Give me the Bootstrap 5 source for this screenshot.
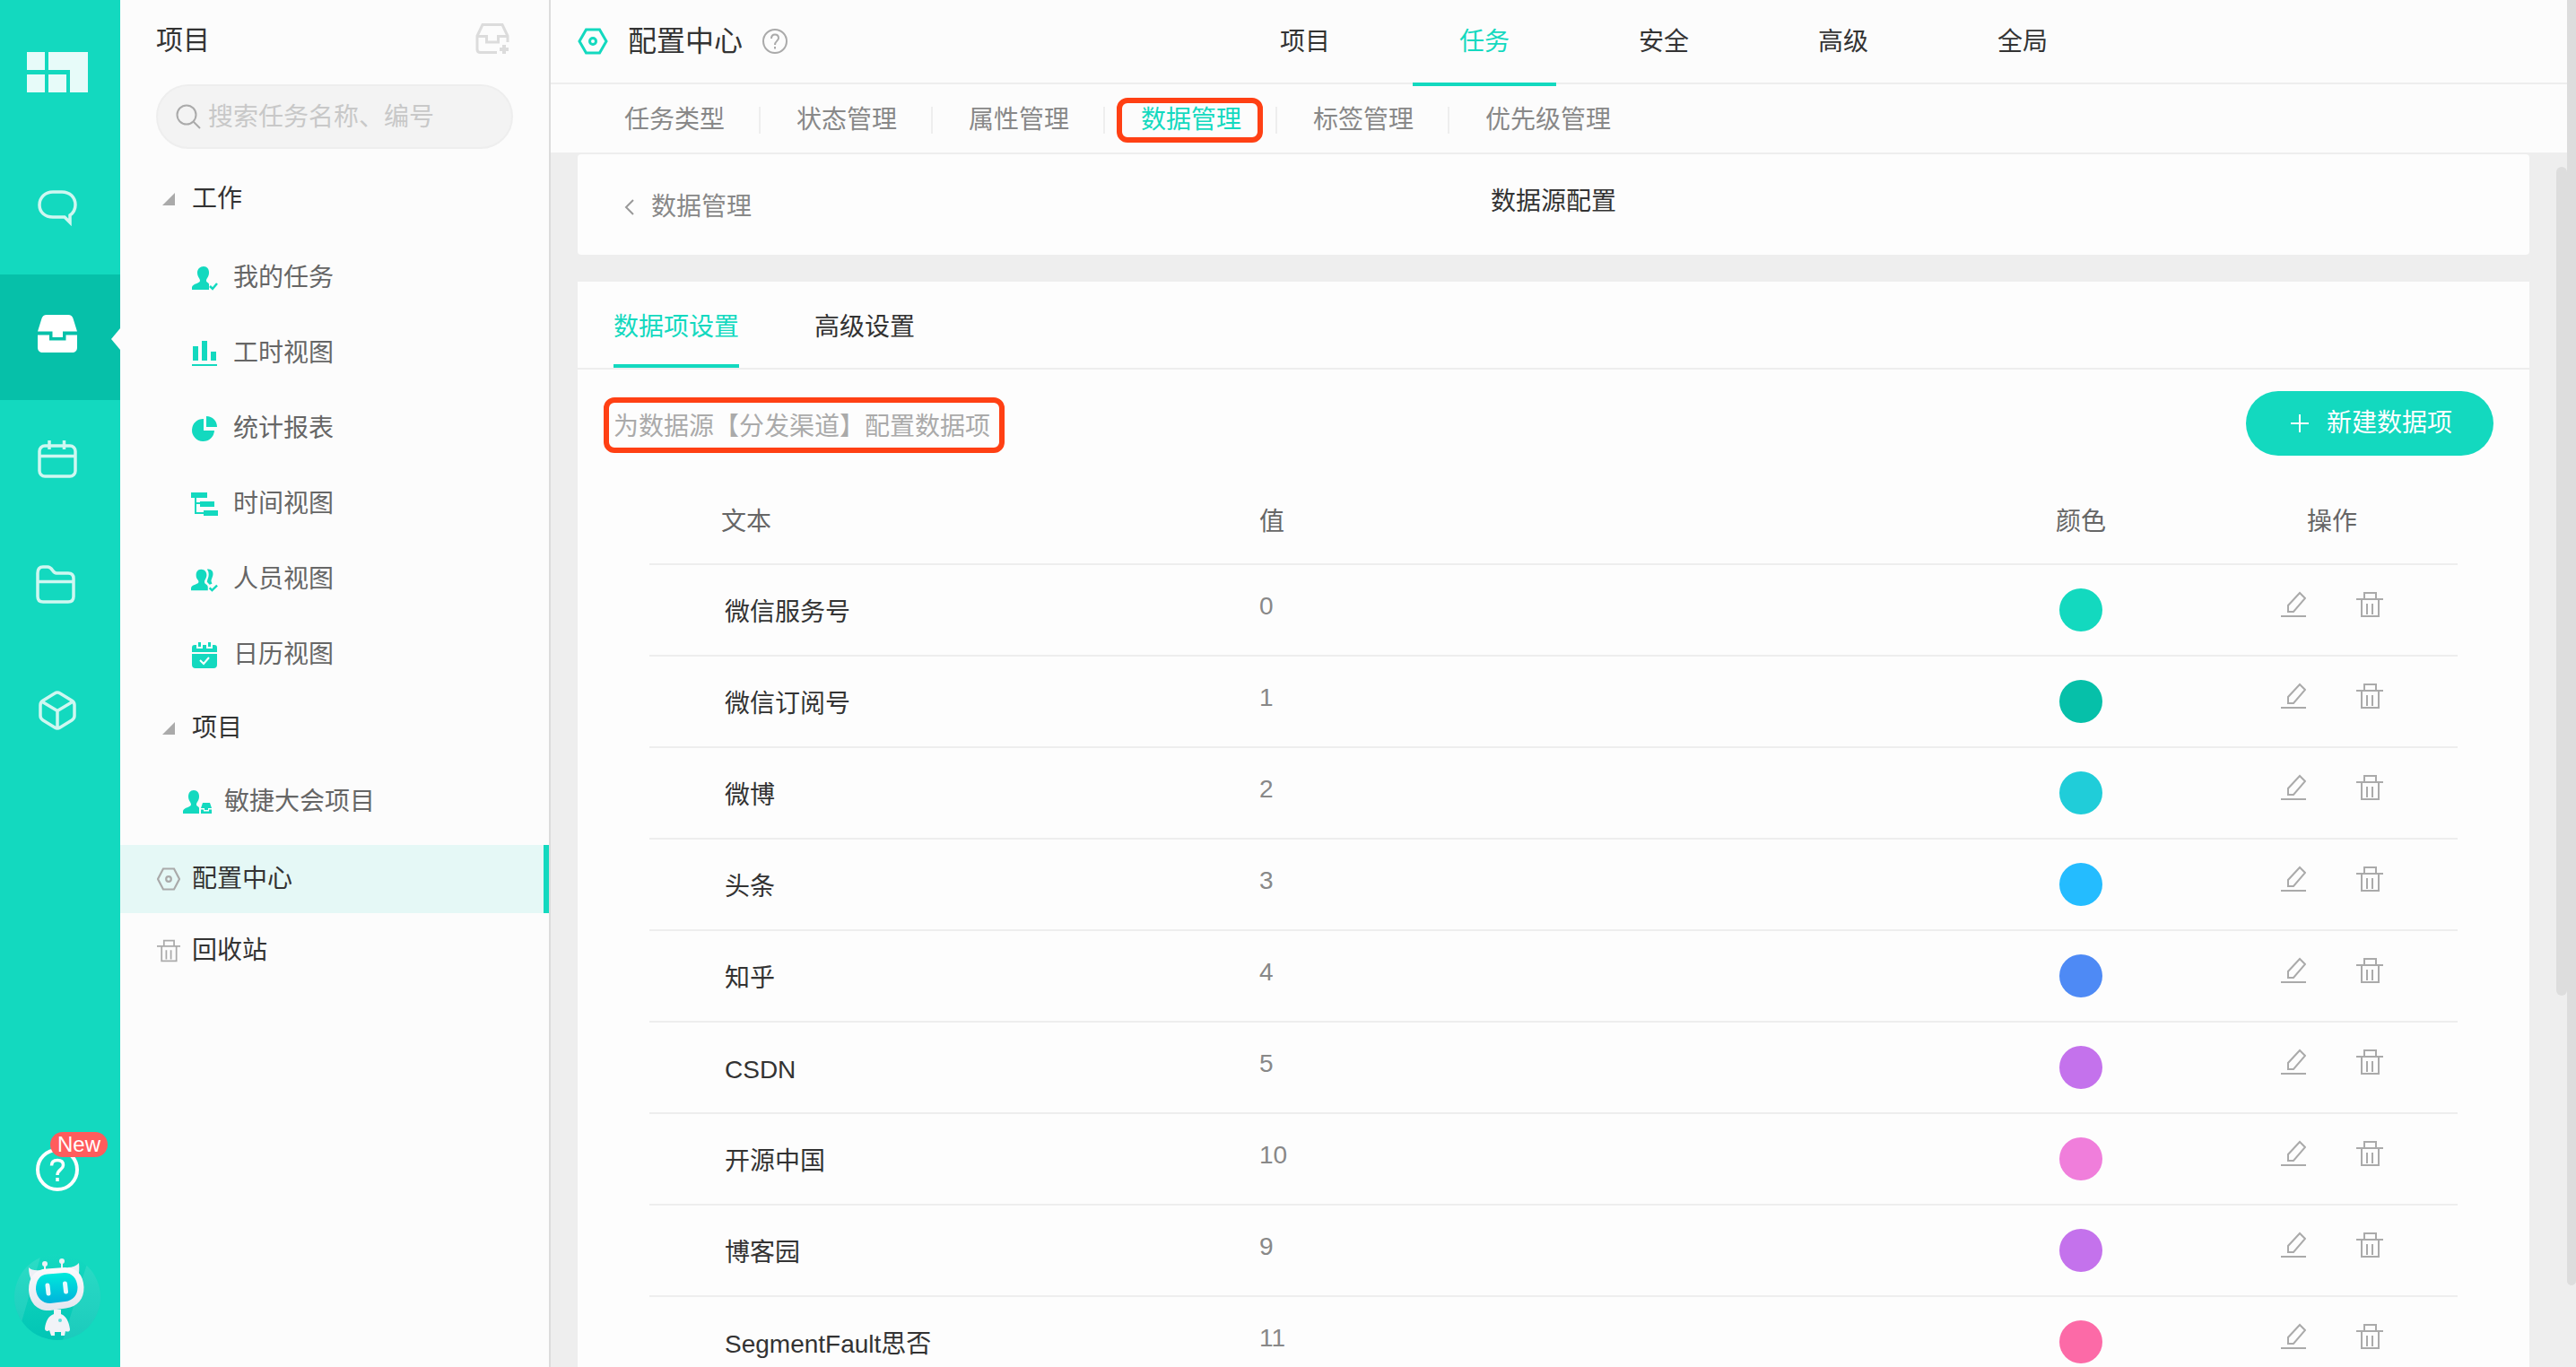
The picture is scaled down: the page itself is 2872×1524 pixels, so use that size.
<!DOCTYPE html>
<html lang="zh-CN">
<head>
<meta charset="utf-8">
<meta name="viewport" content="width=device-width, initial-scale=1">
<title>配置中心</title>
<link href="https://cdn.jsdelivr.net/npm/bootstrap@5.3.0/dist/css/bootstrap.min.css" rel="stylesheet">
<style>
:root { --teal: #13d9bf; --teal-dark: #06c0a9; --line: #eee; --ink: #333; --paper: #fdfdfd; }
body { font-family: "Liberation Sans", "Noto Sans CJK SC", sans-serif; font-size: 28px; line-height: 40px; color: var(--ink); background: #eee; }
a { color: inherit; text-decoration: none; }
svg { display: block; flex: none; }
.teal { color: var(--teal); }

/* icon rail */
.rail { width: 134px; background: var(--teal); color: #cff7f1; }
.rail-logo { height: 166px; padding: 58px 0 0 30px; }
.rail-link { height: 140px; padding: 0 6px 8px 0; }
.rail-link.active { background: var(--teal-dark); color: #fff; position: relative; }
.rail-link.active::after { content: ""; position: absolute; right: 0; top: 60px; border: solid transparent; border-width: 12px 10px 12px 0; border-right-color: #fcfcfc; }
.rail-help { position: relative; margin: 0 46px 70px 40px; color: #fff; }
.rail-new { position: absolute; left: 16px; top: -18px; width: 64px; height: 28px; line-height: 28px; padding: 0; font-size: 24px; font-weight: 400; background: #ff5c5c; }
.rail-avatar { margin: 0 0 30px 16px; }

/* project sidebar */
.side { width: 480px; background: #fcfcfc; border-right: 2px solid #dcdcdc; }
.side-head { padding: 25px 44px 0 40px; height: 94px; font-size: 30px; }
.side-search { margin: 0 40px; height: 72px; border: 2px solid var(--line); background: #f3f3f3; padding-left: 20px; }
.side-search input, .side-search input:focus { background: transparent; border: 0; box-shadow: none; padding: 2px 8px 0; font-size: 28px; line-height: 40px; color: var(--ink); }
.side-search input::placeholder { color: #c8c8c8; }
.side-group { height: 80px; margin-bottom: 6px; padding-left: 47px; gap: 19px; }
.side-item { height: 84px; padding-left: 79px; gap: 17px; color: #666; }
.side-project { height: 72px; margin-bottom: 12px; padding-left: 70px; gap: 14px; color: #666; }
.side-link { height: 76px; padding-left: 41px; gap: 13px; }
.side-link.active { background: #e5f8f6; border-right: 6px solid var(--teal); }
.side-link svg { color: #aaa; }

/* top bar */
.topbar { height: 94px; background: #fcfcfc; border-bottom: 2px solid var(--line); padding: 0 30px; position: relative; z-index: 1; }
.topbar-title { font-size: 32px; margin: 0 22px; }
.topbar-tabs { gap: 40px; }
.topbar-tabs a { width: 160px; height: 96px; padding-top: 27px; text-align: center; border-bottom: 4px solid transparent; }
.topbar-tabs a.active { color: var(--teal); border-color: var(--teal); }
.subnav { height: 78px; background: #fcfcfc; border-bottom: 2px solid var(--line); padding: 3px 0 0 42px; color: #888; }
.subnav a { padding: 0 40px; position: relative; }
.subnav a + a::before { content: ""; position: absolute; left: -2px; top: 5px; width: 2px; height: 30px; background: var(--line); }
.subnav a.active::after { content: ""; position: absolute; left: 13px; right: 16px; top: -5px; height: 50px; border: 6px solid #ff4014; border-radius: 12px; }

/* content */
.stage { padding: 0 42px 0 30px; position: relative; }
.crumb { height: 112px; background: var(--paper); border-radius: 4px; padding: 0 52px; position: relative; }
.crumb-back { padding-top: 6px; gap: 19px; color: #888; }
.crumb-title { position: absolute; left: 0; right: 0; top: 33px; text-align: center; pointer-events: none; }
.sheet { margin-top: 30px; background: var(--paper); }
.sheet-tabs { height: 98px; padding: 0 40px; gap: 84px; border-bottom: 2px solid var(--line); }
.sheet-tabs a { height: 96px; padding-top: 31px; border-bottom: 4px solid transparent; }
.sheet-tabs a.active { color: var(--teal); border-color: var(--teal); }
.sheet-bar { padding: 24px 40px 0 29px; }
.sheet-note { height: 62px; margin-top: 3px; border: 6px solid #ff4014; border-radius: 12px; padding: 7px 10px 0 5px; color: #aaa; }
.btn-new { height: 72px; padding: 0 46px 0 50px; gap: 20px; font-size: 28px; line-height: 40px; color: #fff; background: var(--teal); border: 0; }
.btn-new:hover { color: #fff; background: var(--teal-dark); }
.data-wrap { padding: 18px 80px 0; }
.data-grid { table-layout: fixed; width: 100%; }
.data-grid th { height: 103px; padding: 10px 0 0; font-weight: 400; color: #666; border-bottom: 2px solid var(--line); }
.data-grid td { height: 102px; padding: 0; border-bottom: 2px solid var(--line); vertical-align: middle; }
.col-text { width: 33.73%; }
.col-side { width: 13.89%; text-align: center; }
.data-grid th.col-text { padding-left: 80px; }
.data-grid td:first-child { padding: 5px 0 0 84px; }
.data-grid td:nth-child(2) { color: #888; padding-bottom: 8px; }
.data-grid td:nth-child(4) { padding-bottom: 12px; }
.dot { display: block; width: 48px; height: 48px; border-radius: 50%; margin: 0 auto; }
.icon-btn { background: none; border: 0; padding: 0; color: #aaa; }
.acts { gap: 56px; }
.thumb-inner { position: absolute; right: 0; top: 14px; width: 12px; height: 924px; border-radius: 6px; background: #ddd; }
.thumb-page { width: 10px; height: 94%; background: #ddd; border-radius: 0 0 5px 5px; }
</style>
<script src="https://cdn.jsdelivr.net/npm/bootstrap@5.3.0/dist/js/bootstrap.bundle.min.js"></script>
</head>
<body>
<svg width="0" height="0" class="position-absolute" aria-hidden="true">
  <symbol id="i-edit" viewBox="0 0 28 30"><path d="M8 23V16L21 2l6 6L14 23zM0 28h28" fill="none" stroke="currentColor" stroke-width="2"/></symbol>
  <symbol id="i-trash" viewBox="0 0 30 30"><path d="M0 9h30M9 9V2h13v7M6 9v19h19V9M12 14v12M18 14v12" fill="none" stroke="currentColor" stroke-width="2"/></symbol>
  <symbol id="i-hex" viewBox="0 0 34 30"><path d="M9.500 2h15L32 15l-7.500 13h-15L2 15z" fill="none" stroke="currentColor" stroke-width="3"/><circle cx="17" cy="15" r="3.500" fill="none" stroke="currentColor" stroke-width="3"/></symbol>
  <symbol id="i-hex-small" viewBox="0 0 26 26"><path d="M7 1.500h12L25 13l-6 11.500H7L1 13z" fill="none" stroke="currentColor" stroke-width="2.200"/><circle cx="13" cy="13" r="2.800" fill="none" stroke="currentColor" stroke-width="2.200"/></symbol>
</svg>
<div class="d-flex vh-100 overflow-hidden">

  <nav class="rail d-flex flex-column flex-shrink-0">
    <a class="rail-logo" href="#" aria-label="首页">
      <svg width="68" height="46" fill="#e7fbf9"><path d="M0 0h20v20H0zM0 25h20v20H0zM24 25h20v20H24zM24 0h44v45H48V20H24z"/></svg>
    </a>
    <a class="rail-link d-flex align-items-center justify-content-center" href="#" aria-label="消息">
      <svg width="44" height="40" viewBox="0 0 44 40" fill="none" stroke="currentColor" stroke-width="3.500"><path d="M17 2h10c9 0 15 6 15 14.500 0 5-2.500 9-6 11.500V36l-6-6H17C8 30 2 24.500 2 16.500S8 2 17 2z"/></svg>
    </a>
    <a class="rail-link active d-flex align-items-center justify-content-center" href="#" aria-label="项目">
      <svg width="44" height="42" viewBox="0 0 44 42" fill="currentColor"><path d="M10 0h24c3 0 4.500 1.500 5.500 4L44 18.500H28V25H16.500v-6.500H0L4.500 4C5.500 1.500 7 0 10 0zM0 22.500h13V28.500h18.500v-6H44V36c0 4-2 6-6 6H6c-4 0-6-2-6-6z"/></svg>
    </a>
    <a class="rail-link d-flex align-items-center justify-content-center" href="#" aria-label="日历">
      <svg width="44" height="42" viewBox="0 0 44 42" fill="none" stroke="currentColor" stroke-width="3.500"><rect x="2" y="6" width="40" height="34" rx="6"/><path d="M2 17.500h40M13 0v10M29.500 0v10"/></svg>
    </a>
    <a class="rail-link d-flex align-items-center justify-content-center" href="#" aria-label="文件">
      <svg width="48" height="44" viewBox="0 0 48 44" fill="none" stroke="currentColor" stroke-width="3.500"><path d="M2 18.500h40M2 9c0-5 2-7 6-7h5c6 0 5 7 10 7h13c4 0 6 2 6 6v20c0 4-2 6-6 6H8c-4 0-6-2-6-6z"/></svg>
    </a>
    <a class="rail-link d-flex align-items-center justify-content-center" href="#" aria-label="应用">
      <svg width="42" height="44" viewBox="0 0 42 44" fill="none" stroke="currentColor" stroke-width="3.500" stroke-linejoin="round"><path d="M18 3q3-2 6 0l13 8q3 2 3 5v12q0 3-3 5l-13 8q-3 2-6 0L5 33q-3-2-3-5V16q0-3 3-5zM3.500 12L21 22.500 38.500 12M21 22.500V42"/></svg>
    </a>
    <a class="rail-help mt-auto" href="#" aria-label="帮助">
      <svg width="48" height="48" viewBox="0 0 48 48" fill="none" stroke="currentColor" stroke-width="4"><circle cx="24" cy="24" r="22"/><path d="M17.500 19.500c0-4 2.500-6 6.500-6s6.500 2 6.500 5.500c0 5-6.500 5-6.500 11M24 33v4" stroke-width="3.500"/></svg>
      <span class="rail-new badge rounded-pill">New</span>
    </a>
    <a class="rail-avatar" href="#" aria-label="小助手">
      <svg width="96" height="96" viewBox="0 0 96 96">
        <defs>
          <linearGradient id="g-disc" x1="0" y1="0" x2="0" y2="1"><stop offset="0" stop-color="#14d9c0"/><stop offset="1" stop-color="#02c5b5"/></linearGradient>
          <linearGradient id="g-face" x1="0" y1="0" x2="0" y2="1"><stop offset="0" stop-color="#00eadb"/><stop offset="1" stop-color="#00b2dc"/></linearGradient>
          <linearGradient id="g-body" x1="0" y1="0" x2="0" y2="1"><stop offset="0" stop-color="#fbfbfd"/><stop offset="1" stop-color="#e3e6ef"/></linearGradient>
          <clipPath id="c-disc"><circle cx="48" cy="48" r="48"/></clipPath>
        </defs>
        <circle cx="48" cy="48" r="48" fill="url(#g-disc)"/>
        <g clip-path="url(#c-disc)" fill="#fff" fill-opacity=".1"><path d="M30 0L8 76-10 76V0zM82 8L54 96h50V8z"/></g>
        <path d="M34 11v8M53 9v8" stroke="#eef1f6" stroke-width="2"/><circle cx="34" cy="11" r="3" fill="#eef1f6"/><circle cx="53" cy="8" r="3" fill="#eef1f6"/>
        <path d="M16 15q4 4 13 3L19 29q-3-6-3-14zM72 10q-4 5-13 5l12 11q2-7 1-16z" fill="#eef0f6"/>
        <path d="M36 16.500L56 15c13-.5 21 8 21.500 22 .3 13-7 22-20 23.500L40 63C26 64 17 55 16 40c0-14 7-23 20-23.500z" fill="url(#g-body)"/>
        <path d="M37 22.500L56 21c8 0 14 6 14.500 16 0 9-5 15-14 16L40 55c-9 0-15-6-16-15.500 0-9.500 4-16.500 13-17z" fill="url(#g-face)"/>
        <path d="M37 35l1 9M56.500 33l1 9" stroke="#e9faff" stroke-width="5" stroke-linecap="round"/>
        <path d="M44 62h8v5c6 2 9 9 10 17 0 3-3 3-5 2l-1 5h-4v-4h-7v4h-4l-2-6c-2 2-5 1-5-2 1-8 4-14 10-16z" fill="#f1f3f8"/>
        <circle cx="51" cy="74" r="2" fill="#5fdcdc"/>
      </svg>
    </a>
  </nav>

  <aside class="side flex-shrink-0">
    <div class="side-head d-flex justify-content-between align-items-start">
      <span>项目</span>
      <button class="icon-btn" type="button" aria-label="新建项目">
        <svg width="38" height="36" viewBox="0 0 38 36" fill="none" stroke="#dcdcdc" stroke-width="3"><path d="M36 22v-7L30 2.500H8L2 15v15q0 3.500 3.500 3.500H24M2 15.500h10.500V22h13v-6.500H36"/><path d="M32 25v10M27 30h10" stroke-width="4"/></svg>
      </button>
    </div>
    <div class="side-search d-flex align-items-center rounded-pill">
      <svg width="28" height="28" viewBox="0 0 28 28" fill="none" stroke="#aaa" stroke-width="2"><circle cx="12" cy="12" r="10.500"/><path d="M19.500 19.500L27 27"/></svg>
      <input class="form-control" type="text" placeholder="搜索任务名称、编号" aria-label="搜索任务名称、编号">
    </div>

    <div class="side-group d-flex align-items-center mt-3">
      <svg width="14" height="14" fill="#aaa"><path d="M14 0v14H0z"/></svg><span>工作</span>
    </div>
    <a class="side-item d-flex align-items-center" href="#">
      <svg width="30" height="30" viewBox="0 0 30 30" fill="#13d9bf"><path d="M14 2c4 0 6 3 6 7 0 5-3 6-3 9 0 2 3 2 3 4v6H1v-3c1-4 9-4 9-7S7 14 7 9c0-4 3-7 7-7z"/><path d="M21 24l3 3 5-6" fill="none" stroke="#13d9bf" stroke-width="2.500"/></svg><span>我的任务</span>
    </a>
    <a class="side-item d-flex align-items-center" href="#">
      <svg width="30" height="30" viewBox="0 0 30 30" fill="#13d9bf"><path d="M2 7h6v16H2zM12 1h6v22h-6zM22 13h6v10h-6zM1 27h28v2H1z"/></svg><span>工时视图</span>
    </a>
    <a class="side-item d-flex align-items-center" href="#">
      <svg width="30" height="30" viewBox="0 0 30 30" fill="#13d9bf"><path d="M14 4v13h12A12.500 12.500 0 1 1 14 4zM17 1c7 0 12 5 12 12H17z"/></svg><span>统计报表</span>
    </a>
    <a class="side-item d-flex align-items-center" href="#">
      <svg width="30" height="30" viewBox="0 0 30 30" fill="#13d9bf"><path d="M0 2h18v6H6v5h4v-1h16v6H10v-3H6v9h8v-2h16v6H14v-2H4V8H0z"/></svg><span>时间视图</span>
    </a>
    <a class="side-item d-flex align-items-center" href="#">
      <svg width="30" height="30" viewBox="0 0 32 30" fill="#13d9bf"><path d="M12 3c4 0 7 3 6.500 7.500-.5 4-2.500 5-2.500 7.500 0 3 4 3 4 6v4H0v-3c1-4 9-4 9-7S6 15 6 10c0-4 2-7 6-7zM19 3c5-1 8 3 7 7-1 4-2 5-2 7l1 3-3 1-3-3c0-3 2-5 2-9 0-3-1-5-2-6z"/><path d="M22 25l3 3 6-6" fill="none" stroke="#13d9bf" stroke-width="2.500"/></svg><span>人员视图</span>
    </a>
    <a class="side-item d-flex align-items-center" href="#">
      <svg width="30" height="30" viewBox="0 0 30 30"><path d="M1 12V7q0-3 3-3h22q3 0 3 3v5zM1 14h28v12q0 4-4 4H5q-4 0-4-4z" fill="#13d9bf"/><path d="M9.500 0v8M20.500 0v8" stroke="#fcfcfc" stroke-width="7"/><path d="M9.500 1v5M20.500 1v5" stroke="#13d9bf" stroke-width="3"/><path d="M10 21l4 4 6-7" fill="none" stroke="#fff" stroke-width="2"/></svg><span>日历视图</span>
    </a>
    <div class="side-group d-flex align-items-center">
      <svg width="14" height="14" fill="#aaa"><path d="M14 0v14H0z"/></svg><span>项目</span>
    </div>
    <a class="side-project d-flex align-items-center" href="#">
      <svg width="32" height="28" viewBox="0 0 32 28" fill="#13d9bf"><path d="M12 1c4 0 6 3 6 7 0 5-3 6-3 9 0 2 3 2 3 4v6H0v-3c1-4 9-4 9-7s-3-4-3-9c0-4 2-7 6-7zM22 15h8l2 6h-4v2h-4v-2h-4zM20 22.500h3v2h6v-2h3V27H20z"/></svg><span>敏捷大会项目</span>
    </a>
    <a class="side-link active d-flex align-items-center" href="#">
      <svg width="26" height="26"><use href="#i-hex-small"/></svg><span>配置中心</span>
    </a>
    <a class="side-link d-flex align-items-center mt-1" href="#">
      <svg width="26" height="26"><use href="#i-trash"/></svg><span>回收站</span>
    </a>
  </aside>

  <main class="flex-grow-1 d-flex flex-column overflow-hidden">
    <header class="topbar d-flex align-items-start flex-shrink-0">
      <div class="d-flex align-items-center h-100">
        <svg width="34" height="30" class="teal"><use href="#i-hex"/></svg>
        <span class="topbar-title">配置中心</span>
        <svg width="28" height="28" viewBox="0 0 28 28" fill="none" stroke="#aaa" stroke-width="2"><circle cx="14" cy="14" r="13"/><path d="M10 11c0-3 1.500-4.500 4-4.500s4 1.500 4 4c0 3-4 3.500-4 7.500M14 20v2.500"/></svg>
      </div>
      <nav class="topbar-tabs d-flex mx-auto">
        <a href="#">项目</a><a class="active" href="#">任务</a><a href="#">安全</a><a href="#">高级</a><a href="#">全局</a>
      </nav>
    </header>
    <nav class="subnav d-flex align-items-center flex-shrink-0">
      <a href="#">任务类型</a><a href="#">状态管理</a><a href="#">属性管理</a><a class="active teal" href="#">数据管理</a><a href="#">标签管理</a><a href="#">优先级管理</a>
    </nav>

    <div class="stage flex-grow-1 overflow-hidden">
      <section class="crumb d-flex align-items-center">
        <a class="crumb-back d-flex align-items-center" href="#">
          <svg width="11" height="18" viewBox="0 0 11 18" fill="none" stroke="#999" stroke-width="2"><path d="M10 1L2 9l8 8"/></svg><span>数据管理</span>
        </a>
        <span class="crumb-title">数据源配置</span>
      </section>

      <section class="sheet">
        <nav class="sheet-tabs d-flex">
          <a class="active" href="#">数据项设置</a><a href="#">高级设置</a>
        </nav>
        <div class="sheet-bar d-flex justify-content-between align-items-center">
          <div class="sheet-note">为数据源【分发渠道】配置数据项</div>
          <button class="btn btn-new rounded-pill d-flex align-items-center" type="button">
            <svg width="20" height="20" stroke="#fff" stroke-width="2"><path d="M10 0v20M0 10h20"/></svg><span>新建数据项</span>
          </button>
        </div>
        <div class="data-wrap">
          <table class="data-grid">
            <thead><tr><th class="col-text">文本</th><th>值</th><th class="col-side">颜色</th><th class="col-side">操作</th></tr></thead>
            <tbody>
              <tr><td>微信服务号</td><td>0</td><td><span class="dot" style="background:#13d9bf"></span></td><td><div class="acts d-flex justify-content-center"><button class="icon-btn" type="button" aria-label="编辑"><svg width="28" height="30"><use href="#i-edit"/></svg></button><button class="icon-btn" type="button" aria-label="删除"><svg width="30" height="30"><use href="#i-trash"/></svg></button></div></td></tr>
              <tr><td>微信订阅号</td><td>1</td><td><span class="dot" style="background:#06c0a9"></span></td><td><div class="acts d-flex justify-content-center"><button class="icon-btn" type="button" aria-label="编辑"><svg width="28" height="30"><use href="#i-edit"/></svg></button><button class="icon-btn" type="button" aria-label="删除"><svg width="30" height="30"><use href="#i-trash"/></svg></button></div></td></tr>
              <tr><td>微博</td><td>2</td><td><span class="dot" style="background:#20cdd9"></span></td><td><div class="acts d-flex justify-content-center"><button class="icon-btn" type="button" aria-label="编辑"><svg width="28" height="30"><use href="#i-edit"/></svg></button><button class="icon-btn" type="button" aria-label="删除"><svg width="30" height="30"><use href="#i-trash"/></svg></button></div></td></tr>
              <tr><td>头条</td><td>3</td><td><span class="dot" style="background:#24bcff"></span></td><td><div class="acts d-flex justify-content-center"><button class="icon-btn" type="button" aria-label="编辑"><svg width="28" height="30"><use href="#i-edit"/></svg></button><button class="icon-btn" type="button" aria-label="删除"><svg width="30" height="30"><use href="#i-trash"/></svg></button></div></td></tr>
              <tr><td>知乎</td><td>4</td><td><span class="dot" style="background:#4e8af5"></span></td><td><div class="acts d-flex justify-content-center"><button class="icon-btn" type="button" aria-label="编辑"><svg width="28" height="30"><use href="#i-edit"/></svg></button><button class="icon-btn" type="button" aria-label="删除"><svg width="30" height="30"><use href="#i-trash"/></svg></button></div></td></tr>
              <tr><td>CSDN</td><td>5</td><td><span class="dot" style="background:#c472ec"></span></td><td><div class="acts d-flex justify-content-center"><button class="icon-btn" type="button" aria-label="编辑"><svg width="28" height="30"><use href="#i-edit"/></svg></button><button class="icon-btn" type="button" aria-label="删除"><svg width="30" height="30"><use href="#i-trash"/></svg></button></div></td></tr>
              <tr><td>开源中国</td><td>10</td><td><span class="dot" style="background:#f07edb"></span></td><td><div class="acts d-flex justify-content-center"><button class="icon-btn" type="button" aria-label="编辑"><svg width="28" height="30"><use href="#i-edit"/></svg></button><button class="icon-btn" type="button" aria-label="删除"><svg width="30" height="30"><use href="#i-trash"/></svg></button></div></td></tr>
              <tr><td>博客园</td><td>9</td><td><span class="dot" style="background:#c472ec"></span></td><td><div class="acts d-flex justify-content-center"><button class="icon-btn" type="button" aria-label="编辑"><svg width="28" height="30"><use href="#i-edit"/></svg></button><button class="icon-btn" type="button" aria-label="删除"><svg width="30" height="30"><use href="#i-trash"/></svg></button></div></td></tr>
              <tr><td>SegmentFault思否</td><td>11</td><td><span class="dot" style="background:#fc6aa7"></span></td><td><div class="acts d-flex justify-content-center"><button class="icon-btn" type="button" aria-label="编辑"><svg width="28" height="30"><use href="#i-edit"/></svg></button><button class="icon-btn" type="button" aria-label="删除"><svg width="30" height="30"><use href="#i-trash"/></svg></button></div></td></tr>
            </tbody>
          </table>
        </div>
      </section>
      <div class="thumb-inner"></div>
    </div>
  </main>
  <div class="thumb-page flex-shrink-0"></div>
</div>
</body>
</html>
